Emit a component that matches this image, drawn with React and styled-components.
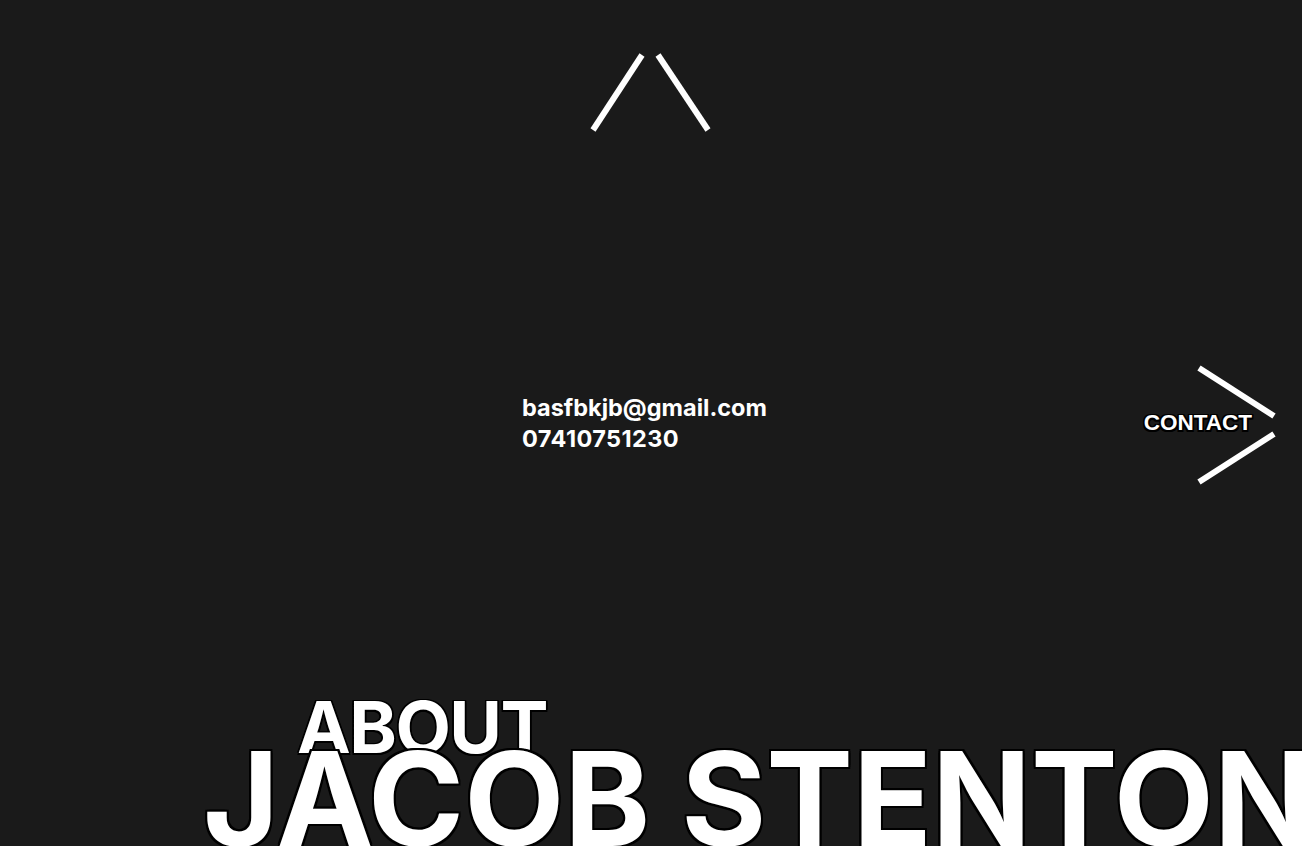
import React from "react";
import styled, { createGlobalStyle } from "styled-components";

const GlobalStyle = createGlobalStyle`
	* {
		box-sizing: border-box;
	}
	body {
		margin: 0;
		background-color: #1a1a1a;
		font-family: Inter, "Liberation Sans", sans-serif;
		color: #fff;
	}
`;

const outline = (w) => `
	text-shadow: -${w}px 0 #000, ${w}px 0 #000, 0 -${w}px #000, 0 ${w}px #000,
		-${w}px -${w}px #000, ${w}px -${w}px #000, -${w}px ${w}px #000, ${w}px ${w}px #000;
`;

const StyledPage = styled.main`
	height: 100vh;
	overflow: hidden;
	display: grid;
	grid-template-columns: minmax(0, 1fr);
	grid-template-rows: 1fr auto 1fr;
`;

const StyledTop = styled.div`
	display: flex;
	justify-content: center;
	align-items: flex-start;
	padding-top: 50px;
`;

const StyledMiddle = styled.div`
	display: flex;
	align-items: center;
	padding-left: 522px;
	padding-right: 23px;
`;

const StyledInfo = styled.div`
	display: flex;
	flex-direction: column;
	font-size: 23.5px;
	font-weight: 700;
	line-height: 31px;
`;

const StyledPhone = styled.span`
	letter-spacing: 0.4px;
`;

const StyledNav = styled.a`
	margin-left: auto;
	display: flex;
	align-items: center;
	color: #fff;
	text-decoration: none;
	cursor: pointer;
`;

const StyledNavLabel = styled.span`
	font-family: "Liberation Sans", Arial, sans-serif;
	font-size: 22.5px;
	font-weight: 700;
	margin-right: -57px;
	position: relative;
	${outline(1.5)}
`;

const StyledBottom = styled.div`
	display: flex;
	flex-direction: column;
	justify-content: flex-end;
	margin-bottom: -18px;
`;

const StyledAbout = styled.h2`
	margin: 0 0 -22px 297px;
	font-size: 72px;
	font-weight: 700;
	letter-spacing: -1.5px;
	line-height: 0.8;
	${outline(1.5)}
`;

const StyledName = styled.h1`
	margin: 0 0 0 203px;
	font-size: 130px;
	font-weight: 700;
	line-height: 1;
	white-space: nowrap;
	position: relative;
	${outline(2)}
`;

const UpArrow = () => (
	<svg width="128" height="86" viewBox="0 0 128 86">
		<g stroke="#fff" strokeWidth="6" fill="none">
			<line x1="6" y1="80" x2="55" y2="5" />
			<line x1="71" y1="5" x2="121" y2="80" />
		</g>
	</svg>
);

const RightArrow = () => (
	<svg width="84" height="126" viewBox="0 0 84 126">
		<g stroke="#fff" strokeWidth="6" fill="none">
			<line x1="4" y1="8" x2="79" y2="56" />
			<line x1="79" y1="74" x2="4" y2="122" />
		</g>
	</svg>
);

const App = () => {
	return (
		<>
			<GlobalStyle />
			<StyledPage>
				<StyledTop>
					<UpArrow />
				</StyledTop>
				<StyledMiddle>
					<StyledInfo>
						<span>basfbkjb@gmail.com</span>
						<StyledPhone>07410751230</StyledPhone>
					</StyledInfo>
					<StyledNav>
						<StyledNavLabel>CONTACT</StyledNavLabel>
						<RightArrow />
					</StyledNav>
				</StyledMiddle>
				<StyledBottom>
					<StyledAbout>ABOUT</StyledAbout>
					<StyledName>JACOB STENTON</StyledName>
				</StyledBottom>
			</StyledPage>
		</>
	);
};

export default App;
